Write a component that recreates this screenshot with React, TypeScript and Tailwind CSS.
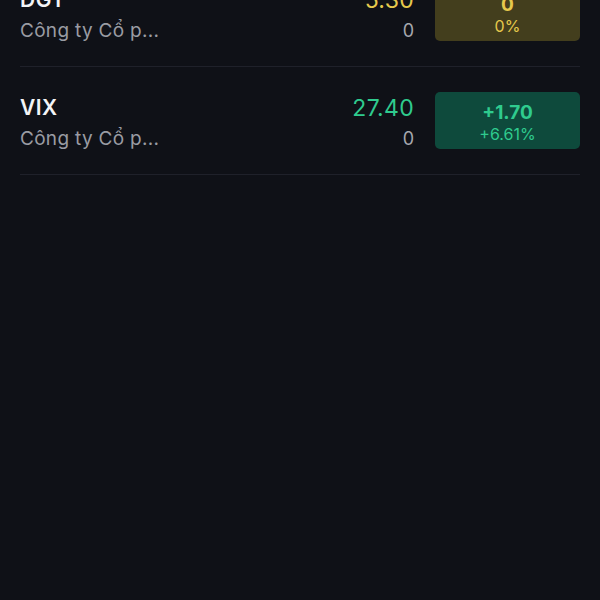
const rows = [
  { code: 'DGT', name: 'Công ty Cổ p...', price: '5.30', vol: '0', change: '0', pct: '0%', tone: 'ref' },
  { code: 'VIX', name: 'Công ty Cổ p...', price: '27.40', vol: '0', change: '+1.70', pct: '+6.61%', tone: 'up' },
];

const tones: Record<string, { text: string; badge: string }> = {
  ref: { text: 'text-[#e6c94c]', badge: 'bg-[#433e1d]' },
  up: { text: 'text-[#2fcb8e]', badge: 'bg-[#0e4a3c]' },
};

export default function App() {
  return (
    <div className="min-h-[600px] bg-[#0f1117] overflow-hidden" style={{ fontFamily: 'Inter, "Noto Sans", sans-serif' }}>
      <div className="mx-5 -mt-[41px]">
        {rows.map((r) => {
          const t = tones[r.tone];
          return (
            <div key={r.code} className="flex items-start py-[25px] border-b border-[#1f212a]">
              <div className="flex-1 min-w-0 h-[57px] pt-[4px]">
                <div className="text-[21px] leading-[24px] font-semibold tracking-[0.5px] text-[#f3f4f6]">{r.code}</div>
                <div className="mt-[7px] text-[19px] leading-[24px] tracking-[0.3px] text-[#9a9ca3] whitespace-nowrap">{r.name}</div>
              </div>
              <div className="text-right h-[57px] pt-[2px]">
                <div className={`text-[23px] leading-[28px] tracking-[0.3px] ${t.text}`}>{r.price}</div>
                <div className="mt-[5px] text-[18px] leading-[24px] text-[#a6a8ae]">{r.vol}</div>
              </div>
              <div className={`ml-[21px] w-[145px] h-[57px] rounded-[5px] flex flex-col items-center pt-[10px] ${t.badge} ${t.text}`}>
                <div className="text-[19px] leading-[22px] font-bold">{r.change}</div>
                <div className="text-[16px] leading-[20px]">{r.pct}</div>
              </div>
            </div>
          );
        })}
      </div>
    </div>
  );
}
